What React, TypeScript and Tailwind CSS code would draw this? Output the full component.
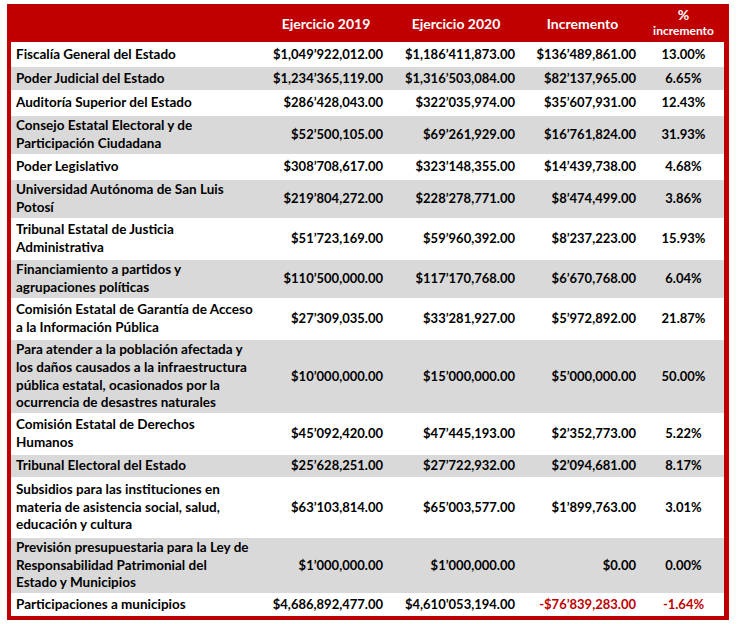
import React from "react";

type Row = { label: string[]; a: string; b: string; c: string; d: string; h: number; gray: boolean; neg?: boolean };

const rows: Row[] = [
  { label: ["Fiscalía General del Estado"], a: "$1,049’922,012.00", b: "$1,186’411,873.00", c: "$136’489,861.00", d: "13.00%", h: 25, gray: false },
  { label: ["Poder Judicial del Estado"], a: "$1,234’365,119.00", b: "$1,316’503,084.00", c: "$82’137,965.00", d: "6.65%", h: 23, gray: true },
  { label: ["Auditoría Superior del Estado"], a: "$286’428,043.00", b: "$322’035,974.00", c: "$35’607,931.00", d: "12.43%", h: 26, gray: false },
  { label: ["Consejo Estatal Electoral y de", "Participación Ciudadana"], a: "$52’500,105.00", b: "$69’261,929.00", c: "$16’761,824.00", d: "31.93%", h: 38, gray: true },
  { label: ["Poder Legislativo"], a: "$308’708,617.00", b: "$323’148,355.00", c: "$14’439,738.00", d: "4.68%", h: 26, gray: false },
  { label: ["Universidad Autónoma de San Luis", "Potosí"], a: "$219’804,272.00", b: "$228’278,771.00", c: "$8’474,499.00", d: "3.86%", h: 38, gray: true },
  { label: ["Tribunal Estatal de Justicia", "Administrativa"], a: "$51’723,169.00", b: "$59’960,392.00", c: "$8’237,223.00", d: "15.93%", h: 42, gray: false },
  { label: ["Financiamiento a partidos y", "agrupaciones políticas"], a: "$110’500,000.00", b: "$117’170,768.00", c: "$6’670,768.00", d: "6.04%", h: 38, gray: true },
  { label: ["Comisión Estatal de Garantía de Acceso", "a la Información Pública"], a: "$27’309,035.00", b: "$33’281,927.00", c: "$5’972,892.00", d: "21.87%", h: 42, gray: false },
  { label: ["Para atender a la población afectada y", "los daños causados a la infraestructura", "pública estatal, ocasionados por la", "ocurrencia de desastres naturales"], a: "$10’000,000.00", b: "$15’000,000.00", c: "$5’000,000.00", d: "50.00%", h: 73, gray: true },
  { label: ["Comisión Estatal de Derechos", "Humanos"], a: "$45’092,420.00", b: "$47’445,193.00", c: "$2’352,773.00", d: "5.22%", h: 42, gray: false },
  { label: ["Tribunal Electoral del Estado"], a: "$25’628,251.00", b: "$27’722,932.00", c: "$2’094,681.00", d: "8.17%", h: 22, gray: true },
  { label: ["Subsidios para las instituciones en", "materia de asistencia social, salud,", "educación y cultura"], a: "$63’103,814.00", b: "$65’003,577.00", c: "$1’899,763.00", d: "3.01%", h: 61, gray: false },
  { label: ["Previsión presupuestaria para la Ley de", "Responsabilidad Patrimonial del", "Estado y Municipios"], a: "$1’000,000.00", b: "$1’000,000.00", c: "$0.00", d: "0.00%", h: 55, gray: true },
  { label: ["Participaciones a municipios"], a: "$4,686,892,477.00", b: "$4,610’053,194.00", c: "-$76’839,283.00", d: "-1.64%", h: 23, gray: false, neg: true },
];

const grid = "grid grid-cols-[251px_128px_132px_121px_81px]";

export default function App() {
  return (
    <div className="w-[737px] h-[624px] bg-white pl-[7px] pt-[4px]" style={{ fontFamily: "Lato, 'Liberation Sans', sans-serif" }}>
      <div className="w-[722px] border-l-[4px] border-r-[5px] border-b-[4px] border-[#C00000] text-[13px] font-bold text-black">
        <div className={`${grid} h-[38px] bg-[#C00000] text-white items-center text-center`}>
          <div></div>
          <div className="text-[14px]">Ejercicio 2019</div>
          <div className="text-[14px]">Ejercicio 2020</div>
          <div className="text-[14px]">Incremento</div>
          <div className="flex flex-col items-center leading-[16px]">
            <span className="text-[14px]">%</span>
            <span className="text-[12px]">incremento</span>
          </div>
        </div>
        {rows.map((r, i) => (
          <div
            key={i}
            className={`${grid} items-center leading-[17.7px] ${r.gray ? "bg-[#D9D9D9]" : "bg-white"}`}
            style={{ height: r.h }}
          >
            <div className="pl-[5px] text-[13.5px]">
              {r.label.map((l, j) => (
                <div key={j}>{l}</div>
              ))}
            </div>
            <div className="text-right pr-[7px]">{r.a}</div>
            <div className="text-right pr-[7px]">{r.b}</div>
            <div className={`text-right pr-[7px] ${r.neg ? "text-[#C00000]" : ""}`}>{r.c}</div>
            <div className={`text-center ${r.neg ? "text-[#C00000]" : ""}`}>{r.d}</div>
          </div>
        ))}
      </div>
    </div>
  );
}
